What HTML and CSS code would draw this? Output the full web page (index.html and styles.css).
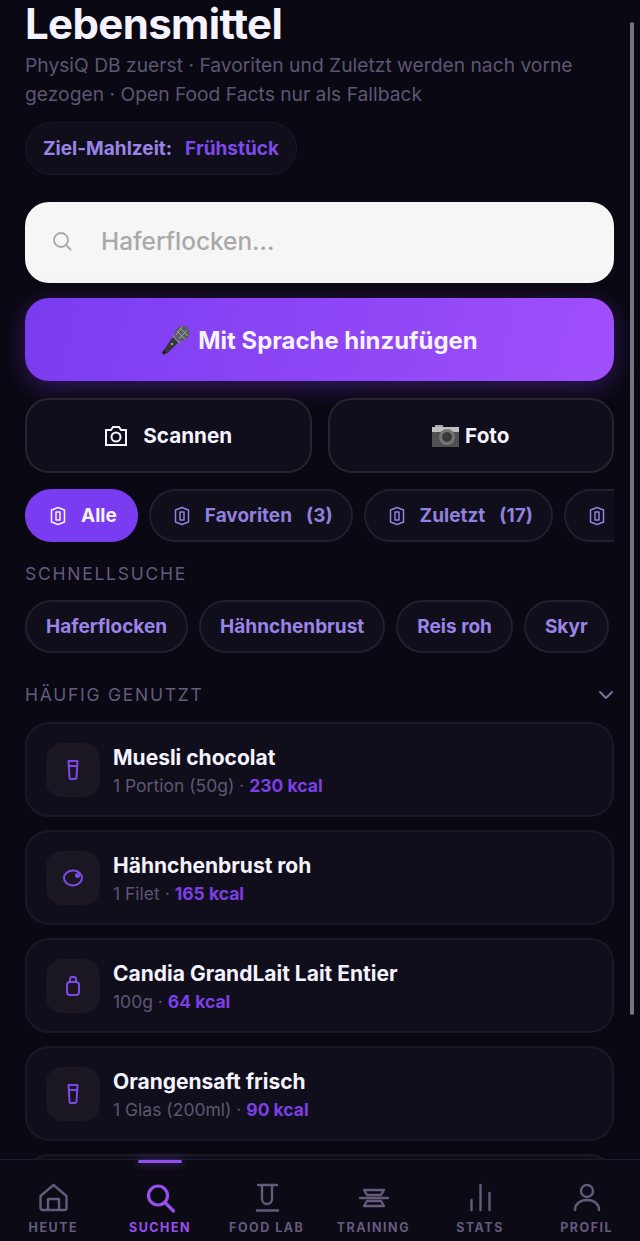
FILE: index.html
```html
<!DOCTYPE html>
<html lang="de">

<head>
    <meta charset="UTF-8">
    <meta name="viewport" content="width=device-width, initial-scale=1.0">
    <title>Lebensmittel</title>
    <link rel="stylesheet" href="styles.css">
</head>

<body>
    <main class="page">
        <h1>Lebensmittel</h1>
        <p class="intro">PhysiQ DB zuerst · Favoriten und Zuletzt werden nach vorne gezogen · Open Food Facts nur als Fallback</p>

        <div class="meal-pill">
            <span>Ziel-Mahlzeit:</span>
            <strong>Frühstück</strong>
        </div>

        <div class="search">
            <svg width="22" height="22" viewBox="0 0 22 22" fill="none" stroke="#a9a9a9" stroke-width="1.8" stroke-linecap="round"><circle cx="10" cy="10" r="7"/><path d="M15.2 15.2l4.3 4.3"/></svg>
            <span>Haferflocken...</span>
        </div>

        <button class="voice-btn">
            <svg width="30" height="32" viewBox="0 0 30 32"><path d="M1 28.500l1.500 2 4-1.500 11-10.500-5.500-6z" fill="#35353b"/><path d="M1 28.500l1.500 2 3-2-2-2z" fill="#1c1c20"/><path d="M11.500 12.500l6.500 7 1.500-1.500-6.500-7z" fill="#8a8a92"/><ellipse cx="21" cy="9.500" rx="7" ry="8" transform="rotate(45 21 9.500)" fill="#5c5c64"/><path d="M16 7l8 8M19 4l8 8M15 11l6-8M18 15l8-9" stroke="#a2a2aa" stroke-width="1"/><circle cx="11" cy="20" r="1.200" fill="#9a9aa2"/></svg>
            <span>Mit Sprache hinzufügen</span>
        </button>

        <div class="action-row">
            <button class="action-btn">
                <svg width="24" height="24" viewBox="0 0 24 24" fill="none" stroke="#f5f3ff" stroke-width="2"><path d="M2 21V6h5l2-3h6l2 3h5v15z"/><circle cx="12" cy="13" r="4.500"/></svg>
                <span>Scannen</span>
            </button>
            <button class="action-btn tight">
                <svg width="27" height="22" viewBox="0 0 27 22"><rect x="3" y="0" width="8" height="3" fill="#a5a5a5"/><rect x="0" y="2" width="27" height="5" fill="#c0c0c0"/><rect x="0" y="7" width="27" height="15" fill="#505050"/><circle cx="15" cy="12" r="8" fill="#757575"/><circle cx="15" cy="12" r="5" fill="#3a3a3a"/></svg>
                <span>Foto</span>
            </button>
        </div>

        <div class="filter-row">
            <div class="filter active">
                <svg class="shield" viewBox="0 0 16 20"><path d="M1.500 4L8 1.500 14.500 4v12L8 18.500 1.500 16z"/><path d="M6 6h4v8H6z"/></svg>
                <span>Alle</span>
            </div>
            <div class="filter">
                <svg class="shield" viewBox="0 0 16 20"><path d="M1.500 4L8 1.500 14.500 4v12L8 18.500 1.500 16z"/><path d="M6 6h4v8H6z"/></svg>
                <span>Favoriten</span>
                <span>(3)</span>
            </div>
            <div class="filter">
                <svg class="shield" viewBox="0 0 16 20"><path d="M1.500 4L8 1.500 14.500 4v12L8 18.500 1.500 16z"/><path d="M6 6h4v8H6z"/></svg>
                <span>Zuletzt</span>
                <span>(17)</span>
            </div>
            <div class="filter more">
                <svg class="shield" viewBox="0 0 16 20"><path d="M1.500 4L8 1.500 14.500 4v12L8 18.500 1.500 16z"/><path d="M6 6h4v8H6z"/></svg>
            </div>
        </div>

        <h2 class="label">SCHNELLSUCHE</h2>
        <div class="quick-row">
            <div class="quick">Haferflocken</div>
            <div class="quick">Hähnchenbrust</div>
            <div class="quick">Reis roh</div>
            <div class="quick">Skyr</div>
        </div>

        <div class="section-head">
            <h2 class="label">HÄUFIG GENUTZT</h2>
            <svg width="16" height="10" viewBox="0 0 16 10" fill="none" stroke="#7d6f9e" stroke-width="2" stroke-linecap="round" stroke-linejoin="round"><path d="M2 2l6 6 6-6"/></svg>
        </div>

        <div class="food-list">
            <div class="food">
                <div class="food-icon">
                    <svg viewBox="0 0 24 24"><path d="M7.500 3h9l-1 16.500a1.500 1.500 0 0 1-1.500 1.500h-4a1.500 1.500 0 0 1-1.500-1.500zM7.800 8h8.400"/></svg>
                </div>
                <div class="food-text">
                    <div class="food-name">Muesli chocolat</div>
                    <div class="food-meta">1 Portion (50g) · <b>230 kcal</b></div>
                </div>
            </div>
            <div class="food">
                <div class="food-icon">
                    <svg viewBox="0 0 24 24"><ellipse cx="12" cy="12" rx="9" ry="7.500"/><circle cx="16.500" cy="9.500" r="2.500" class="dot"/></svg>
                </div>
                <div class="food-text">
                    <div class="food-name">Hähnchenbrust roh</div>
                    <div class="food-meta">1 Filet · <b>165 kcal</b></div>
                </div>
            </div>
            <div class="food">
                <div class="food-icon">
                    <svg viewBox="0 0 24 24"><path d="M9 8V5a2 2 0 0 1 2-2h2a2 2 0 0 1 2 2v3"/><rect x="6" y="8" width="12" height="13" rx="3"/></svg>
                </div>
                <div class="food-text">
                    <div class="food-name">Candia GrandLait Lait Entier</div>
                    <div class="food-meta">100g · <b>64 kcal</b></div>
                </div>
            </div>
            <div class="food">
                <div class="food-icon">
                    <svg viewBox="0 0 24 24"><path d="M7.500 3h9l-1 16.500a1.500 1.500 0 0 1-1.500 1.500h-4a1.500 1.500 0 0 1-1.500-1.500zM7.800 8h8.400"/></svg>
                </div>
                <div class="food-text">
                    <div class="food-name">Orangensaft frisch</div>
                    <div class="food-meta">1 Glas (200ml) · <b>90 kcal</b></div>
                </div>
            </div>
            <div class="food"></div>
        </div>
    </main>

    <div class="scrollbar"></div>

    <nav class="tabbar">
        <div class="tab">
            <svg viewBox="0 0 32 32"><path d="M3.500 14L16.500 3l13 11v12a2 2 0 0 1-2 2h-22a2 2 0 0 1-2-2zM11 28V17h11v11"/></svg>
            <span>HEUTE</span>
        </div>
        <div class="tab active">
            <svg viewBox="0 0 32 32"><circle cx="14" cy="13.500" r="9.500"/><path d="M21 20.500L29.500 29"/></svg>
            <span>SUCHEN</span>
        </div>
        <div class="tab">
            <svg viewBox="0 0 32 32"><path d="M7 3h19M11 3v14a5 5 0 0 0 10 0V3M6 28.500h21"/></svg>
            <span>FOOD LAB</span>
        </div>
        <div class="tab">
            <svg viewBox="0 0 32 32"><path d="M3 16h28M7 8h20l-3 5H10zM10 19h14l3 5H7z"/></svg>
            <span>TRAINING</span>
        </div>
        <div class="tab">
            <svg viewBox="0 0 32 32"><path d="M7.500 28V18M16.500 28V3M25.500 28V11"/></svg>
            <span>STATS</span>
        </div>
        <div class="tab">
            <svg viewBox="0 0 32 32"><circle cx="16" cy="9" r="6"/><path d="M4 28c0-6 5-10 12-10s12 4 12 10"/></svg>
            <span>PROFIL</span>
        </div>
    </nav>
</body>

</html>
```

FILE: styles.css
```css
* {
    box-sizing: border-box;
}

html,
body {
    height: 100%;
}

body {
    margin: 0;
    overflow: hidden;
    background-color: #0a0812;
    font-family: 'Inter', sans-serif;
    color: #f5f3ff;
}

button {
    font-family: inherit;
    color: inherit;
    cursor: pointer;
}

.page {
    padding: 0 26px 0 25px;
}

h1 {
    margin: 0;
    padding-top: 1px;
    font-size: 42px;
    line-height: 46px;
    font-weight: 700;
    letter-spacing: -0.65px;
}

.intro {
    margin: 4px 0 0;
    font-size: 19.25px;
    line-height: 29px;
    color: #5d5673;
}

.meal-pill {
    display: inline-flex;
    align-items: center;
    gap: 13px;
    height: 53px;
    margin-top: 13px;
    padding: 0 17px;
    border: 1px solid #1c1829;
    border-radius: 27px;
    background-color: #100e1a;
    font-size: 19px;
    font-weight: 700;
    color: #9b84e8;
}

.meal-pill strong {
    font-weight: 700;
    color: #7c4ae8;
}

.search {
    display: flex;
    align-items: center;
    gap: 28px;
    height: 81px;
    margin-top: 27px;
    padding: 0 0 3px 26px;
    border-radius: 24px;
    background-color: #f6f6f6;
    font-size: 24.4px;
    font-weight: 500;
    color: #a9a9a9;
}

.voice-btn {
    display: flex;
    align-items: center;
    justify-content: center;
    gap: 7px;
    width: 100%;
    height: 83px;
    margin-top: 15px;
    padding-top: 2px;
    border: 0;
    border-radius: 24px;
    background: linear-gradient(105deg, #7a3cf0, #a04ffb);
    box-shadow: 0 6px 24px rgba(124, 58, 237, 0.35);
    font-size: 23.9px;
    font-weight: 700;
}

.action-row {
    display: flex;
    gap: 16px;
    margin-top: 17px;
}

.action-btn {
    display: flex;
    flex: 1;
    align-items: center;
    justify-content: center;
    gap: 15px;
    height: 75px;
    border: 2px solid #27242f;
    border-radius: 24px;
    background-color: #100e1a;
    font-size: 20.7px;
    font-weight: 700;
}

.action-btn.tight {
    gap: 6px;
}

.filter-row {
    display: flex;
    gap: 11px;
    margin-top: 16px;
    overflow: hidden;
}

.filter {
    display: flex;
    flex: none;
    align-items: center;
    gap: 14px;
    height: 53px;
    padding: 0 18px 0 23px;
    border: 2px solid #221f2c;
    border-radius: 27px;
    background-color: #100e1a;
    font-size: 19px;
    font-weight: 700;
    color: #9180de;
}

.filter.active {
    padding-right: 19px;
    border-color: #7a3cf0;
    background-color: #7a3cf0;
    color: #f5f3ff;
}

.filter.more {
    width: 80px;
}

.shield {
    width: 16px;
    height: 20px;
    margin-right: 1px;
    fill: none;
    stroke: currentColor;
    stroke-width: 1.5;
    stroke-linejoin: round;
}

.label {
    margin: 0;
    font-size: 17.5px;
    line-height: 20px;
    font-weight: 400;
    letter-spacing: 1.75px;
    color: #645b7e;
}

.filter-row + .label {
    margin-top: 22px;
}

.quick-row {
    display: flex;
    gap: 11px;
    margin-top: 16px;
}

.quick {
    display: flex;
    align-items: center;
    height: 53px;
    padding: 0 19px;
    border: 2px solid #221f2c;
    border-radius: 27px;
    background-color: #100e1a;
    font-size: 19px;
    font-weight: 700;
    color: #9b84e8;
}

.section-head {
    display: flex;
    align-items: center;
    justify-content: space-between;
    margin-top: 32px;
}

.food-list {
    display: flex;
    flex-direction: column;
    gap: 13px;
    margin-top: 17px;
}

.food {
    display: flex;
    flex: none;
    align-items: center;
    gap: 13px;
    height: 95px;
    padding: 0 19px;
    border: 2px solid #1b1826;
    border-radius: 24px;
    background-color: #100e1a;
}

.food-icon {
    display: flex;
    align-items: center;
    justify-content: center;
    width: 54px;
    height: 54px;
    border-radius: 16px;
    background-color: #1a1723;
}

.food-icon svg {
    width: 24px;
    height: 24px;
    fill: none;
    stroke: #7c4ae8;
    stroke-width: 2;
    stroke-linejoin: round;
}

.food-icon .dot {
    fill: #7c4ae8;
    stroke: none;
}

.food-text {
    padding-top: 3px;
}

.food-name {
    font-size: 21px;
    line-height: 26px;
    font-weight: 700;
}

.food-meta {
    margin-top: 3px;
    font-size: 17.5px;
    line-height: 24px;
    color: #5d5673;
}

.food-meta b {
    font-weight: 700;
    color: #7c3fe4;
}

.scrollbar {
    position: absolute;
    top: 22px;
    right: 6px;
    width: 4px;
    height: 993px;
    border-radius: 2px;
    background-color: #77757c;
}

.tabbar {
    position: fixed;
    left: 0;
    right: 0;
    bottom: 0;
    display: flex;
    height: 82px;
    border-top: 1px solid #1e1830;
    background-color: #0c0a14;
}

.tab {
    position: relative;
    display: flex;
    flex: 1;
    flex-direction: column;
    align-items: center;
    gap: 6px;
    padding-top: 22px;
    font-size: 12.5px;
    line-height: 16px;
    font-weight: 700;
    letter-spacing: 1.5px;
    color: #635a7c;
}

.tab svg {
    width: 32px;
    height: 32px;
    fill: none;
    stroke: currentColor;
    stroke-width: 2.4;
    stroke-linecap: round;
    stroke-linejoin: round;
}

.tab.active {
    color: #9a4ff0;
}

.tab.active svg {
    stroke-width: 3.2;
}

.tab.active::before {
    content: "";
    position: absolute;
    top: 0;
    left: 50%;
    width: 44px;
    height: 3px;
    margin-left: -22px;
    border-radius: 2px;
    background-color: #9150f0;
    box-shadow: 0 0 8px rgba(145, 80, 240, 0.6);
}
```
